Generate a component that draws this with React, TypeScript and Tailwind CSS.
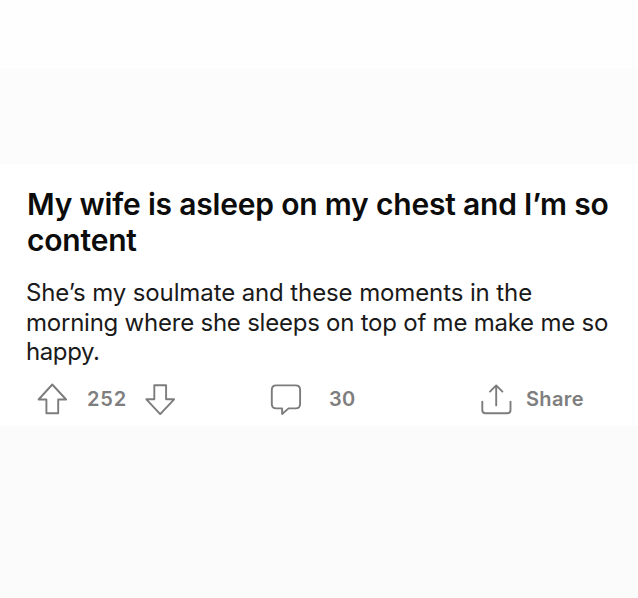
const stroke = {
  fill: "none",
  stroke: "#7c7c7c",
  strokeWidth: 1.9,
  strokeLinejoin: "round" as const,
  strokeLinecap: "round" as const,
};

function UpvoteIcon() {
  return (
    <svg className="h-8 w-8 shrink-0" viewBox="0 0 32 32" {...stroke}>
      <path d="M16.3 1.5 30.1 16.5H22.2V30.3H10.4V16.5H2.6Z" />
    </svg>
  );
}

function DownvoteIcon() {
  return (
    <svg className="h-8 w-8 shrink-0" viewBox="0 0 32 32" {...stroke}>
      <path d="M10.3 2.3H22.1V16.3H30.1L16.2 31.2 2.4 16.3H10.3Z" />
    </svg>
  );
}

function CommentIcon() {
  return (
    <svg className="h-8 w-8 shrink-0" viewBox="0 0 32 32" {...stroke}>
      <path d="M6.3 2.4H25.6Q30.1 2.4 30.1 6.9V20.9Q30.1 25.4 25.6 25.4H18.6L12.1 31V25.4H6.3Q1.8 25.4 1.8 20.9V6.9Q1.8 2.4 6.3 2.4Z" />
    </svg>
  );
}

function ShareIcon() {
  return (
    <svg className="h-8 w-8 shrink-0" viewBox="0 0 32 32" {...stroke}>
      <path d="M16.2 22.4V2.6M10 8.6 16.2 2.4 22.4 8.6M2.3 18.6V27Q2.3 30.3 5.6 30.3H27.2Q30.5 30.3 30.5 27V18.6" />
    </svg>
  );
}

export default function App() {
  return (
    <main className="flex h-[598px] w-[638px] flex-col overflow-hidden bg-[#fbfbfb] font-['Inter','Liberation_Sans',sans-serif]">
      <div className="h-[68px] shrink-0 bg-[#fefefe]" />
      <div className="h-24 shrink-0 bg-[#fcfcfc]" />
      <article className="h-[262px] shrink-0 bg-white pt-[22px] pl-[26px]">
        <h1 className="pl-px text-[30px] leading-[36px] font-semibold tracking-[-0.19px] whitespace-nowrap text-[#0c0c0c]">
          My wife is asleep on my chest and I’m so
          <br />
          content
        </h1>
        <p className="mt-5 text-[24px] leading-[29.5px] whitespace-nowrap text-[#1a1a1a]">
          <span className="tracking-[-0.11px]">She’s my soulmate and these moments in the</span>
          <br />
          <span className="tracking-[-0.23px]">morning where she sleeps on top of me make me so</span>
          <br />
          <span className="tracking-[-0.4px]">happy.</span>
        </p>
        <footer className="mt-4 flex h-8 items-center pl-[10px] text-[20px] font-[560] text-[#7e7e7e]">
          <UpvoteIcon />
          <span className="ml-[19px] w-[57px] tracking-[0.8px]">252</span>
          <DownvoteIcon />
          <span className="ml-[94px] flex">
            <CommentIcon />
          </span>
          <span className="ml-[27px] w-[151px] tracking-[0.2px]">30</span>
          <ShareIcon />
          <span className="ml-[14px] tracking-[0.35px]">Share</span>
        </footer>
      </article>
    </main>
  );
}
